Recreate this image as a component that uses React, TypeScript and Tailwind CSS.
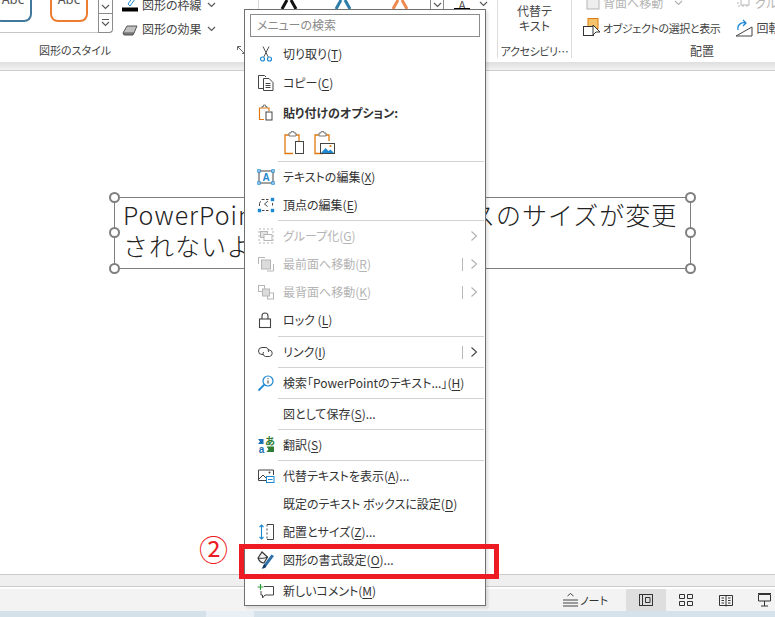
import React from "react";

const font = "[font-family:'Noto_Sans_CJK_JP','Noto_Sans',sans-serif] [font-feature-settings:'palt']";

const S = ({ w = 18, h = 18, vb, children, cls = "" }: { w?: number; h?: number; vb?: string; children: React.ReactNode; cls?: string }) => (
  <svg width={w} height={h} viewBox={vb ?? `0 0 ${w} ${h}`} fill="none" className={`block shrink-0 ${cls}`}>{children}</svg>
);

const DK = "#444";
const BL = "#1e88d2";
const OR = "#e07a10";
const GR = "#b5b5b5";

const Scissors = () => (
  <S><path d="M6 1.500 L11.200 12 M12 1.500 L6.800 12" stroke="#555" strokeWidth="1" /><circle cx="5.500" cy="14" r="2" stroke={BL} strokeWidth="1.200" /><circle cx="12.500" cy="14" r="2" stroke={BL} strokeWidth="1.200" /></S>
);
const Copy = () => (
  <S><path d="M6 14.500H1.500V1.500H7.500L9 3" stroke={DK} /><path d="M6.500 4.500H12L16 8.500V16.500H6.500Z" fill="#fff" stroke={DK} /><path d="M8.500 9.500h5M8.500 11.500h5M8.500 13.500h5" stroke={DK} /></S>
);
const Paste = () => (
  <S><path d="M7 15.500H2.500V4H12V7" stroke={OR} strokeWidth="1.200" /><path d="M5 4V2.500H6.500V1H8.500V2.500H10V4" stroke="#777" /><rect x="9" y="8" width="6" height="8" fill="#fff" stroke={DK} /></S>
);
const PasteBig = ({ picture }: { picture?: boolean }) => (
  <S w={22} h={24}>
    <path d="M9 22.500H1V4H15V10" stroke={OR} strokeWidth="1.300" />
    <path d="M5 4V2H7V0.700H10V2H12V5H5Z" fill="#fff" stroke="#777" />
    {picture ? (
      <>
        <rect x="6.500" y="12.500" width="14" height="10" fill="#fff" stroke={DK} />
        <path d="M7 22l4.500-5 3 3 2-1.500 3.500 3.500Z" fill={BL} />
        <circle cx="16.500" cy="15" r="1.100" fill={OR} />
      </>
    ) : (
      <rect x="11.500" y="10.500" width="8" height="12" fill="#fff" stroke={DK} />
    )}
  </S>
);
const TextEdit = () => (
  <S>
    <rect x="2" y="3" width="14" height="12" stroke="#444" />
    {[[2, 3], [16, 3], [2, 15], [16, 15]].map(([x, y], i) => <rect key={i} x={x - 1.200} y={y - 1.200} width="2.400" height="2.400" fill="#fff" stroke={BL} />)}
    <text x="9" y="12.500" textAnchor="middle" fontSize="10" fontWeight="700" fill={BL} fontFamily="Liberation Sans">A</text>
  </S>
);
const Vertices = () => (
  <S>
    <path d="M5 3.500h8M2.500 7.500L4.500 3.500M15.500 7v4M5 14.500h8M2.500 7.500v4" stroke={DK} strokeDasharray="2.500 1.500" />
    <path d="M11 5L7.500 8l3 2.500" stroke={DK} />
    {[[15.500, 3.500], [2.500, 14.500], [15.500, 14.500]].map(([x, y], i) => <rect key={i} x={x - 1.700} y={y - 1.700} width="3.400" height="3.400" fill={BL} />)}
  </S>
);
const Group = () => (
  <S>
    <rect x="2" y="2" width="14" height="14" stroke={GR} strokeDasharray="2 2" />
    <rect x="3.500" y="4.500" width="7" height="6" fill="#e4e4e4" stroke={GR} />
    <rect x="7" y="7.500" width="8" height="6" fill="#fff" stroke={GR} />
  </S>
);
const Front = () => (
  <S>
    <path d="M1.500 9V2.500H8" stroke={GR} /><path d="M16.500 9v7H10" stroke={GR} />
    <rect x="4.500" y="5" width="9" height="9" fill="#dcdcdc" stroke={GR} />
  </S>
);
const Back = () => (
  <S>
    <rect x="1.500" y="2.500" width="6" height="6" fill="#fff" stroke={GR} />
    <rect x="10.500" y="10" width="6" height="6" fill="#fff" stroke={GR} />
    <rect x="5.500" y="6" width="7" height="7" fill="#dcdcdc" stroke={GR} />
  </S>
);
const Lock = () => (
  <S><rect x="2.500" y="8" width="11" height="8.500" stroke={DK} strokeWidth="1.100" /><path d="M5 8V5a3 3 0 0 1 6 0v3" stroke={DK} strokeWidth="1.100" /></S>
);
const LinkIcon = () => (
  <S>
    <path d="M6.500 11.500H5a3.500 3.500 0 0 1 0-7h4a3.400 3.400 0 0 1 2.500 4.500" stroke={DK} />
    <path d="M10.500 7h2a3.300 3.300 0 0 1 0 6.500h-4a3 3 0 0 1-2-4.500" stroke={DK} />
  </S>
);
const SearchI = () => (
  <S><circle cx="11" cy="7" r="5" stroke={BL} strokeWidth="1.200" /><path d="M7.300 10.700L1.500 16.500" stroke={BL} strokeWidth="1.800" /><path d="M11 6.500V9.500M11 4.200v1" stroke="#333" /></S>
);
const Translate = () => (
  <S>
    <path d="M1 3h5.500v5H1l2-2.500Z" fill="#1a6fb5" />
    <text x="13" y="8.500" textAnchor="middle" fontSize="10" fontWeight="700" fill="#2e7d32" fontFamily="Noto Sans CJK JP">あ</text>
    <path d="M9.500 10.500H17v5.500H9.500l2-2.700Z" fill="#2e7d32" />
    <text x="4.500" y="17" textAnchor="middle" fontSize="10" fontWeight="700" fill="#1a6fb5" fontFamily="Liberation Sans">a</text>
  </S>
);
const AltText = () => (
  <S>
    <path d="M9 13.500H1.500V3h15v5" stroke={DK} />
    <circle cx="12.500" cy="5.500" r="1" fill={DK} />
    <path d="M2 12l4-4 3 3" stroke={DK} />
    <rect x="9.500" y="9.500" width="7.500" height="6" fill="#fff" stroke={BL} />
    <path d="M11 12.500h4.500" stroke={BL} />
  </S>
);
const SizeIcon = () => (
  <S>
    <path d="M4.500 2v14M2.500 4l2-2 2 2M2.500 14l2 2 2-2" stroke={BL} strokeWidth="1.100" />
    <path d="M10 1.500h6.500v15H10" stroke={DK} />
    <path d="M10 1.500v15" stroke={DK} strokeDasharray="2 2" />
  </S>
);
const FormatIcon = () => (
  <S>
    <path d="M1 7L5 1l5.500 5L7 12C4.500 12 2 9.500 1 7Z" fill="#f4f4f4" stroke="#333" strokeWidth="1.200" />
    <path d="M1 7c2 .5 6 .8 9.500-1" stroke="#333" />
    <path d="M7 13.500L14.500 3.500l2.500 1.500-7.500 10Z" fill="#2b6ea8" />
    <path d="M4.500 17.500c2.500 0 4.500-.5 5-2.500L7.500 13C6 13.500 6 16.500 4.500 17.500Z" fill="#123f66" />
  </S>
);
const CommentIcon = () => (
  <S>
    <path d="M7 4.500H16.500V13H8L5.500 16V13H4V9" stroke={DK} />
    <path d="M0.500 5h6M3.500 2v6" stroke="#2e9e3f" strokeWidth="1.200" />
  </S>
);

const Chevron = ({ dim }: { dim?: boolean }) => (
  <S w={8} h={12}><path d="M1.500 1.500L6.500 6 1.500 10.500" stroke={dim ? "#b0b0b0" : "#444"} strokeWidth="1.100" /></S>
);
const Down = ({ dim }: { dim?: boolean }) => (
  <S w={9} h={6}><path d="M1 1l3.500 3.500L8 1" stroke={dim ? "#b0b0b0" : "#555"} strokeWidth="1.100" /></S>
);

const Sep = ({ h = "h-[3px]" }: { h?: string }) => (
  <div className={`${h} flex items-center pl-[33px] pr-[1px]`}>
    <div className="h-px w-full bg-[#d2d2d2]" />
  </div>
);

type RowProps = {
  icon?: React.ReactNode;
  label: string;
  keyChar?: string;
  tail?: string;
  dim?: boolean;
  sub?: "split" | "plain";
  h?: string;
  bold?: boolean;
};

const Row = ({ icon, label, keyChar, tail, dim, sub, h = "h-[28px]", bold }: RowProps) => (
  <div className={`${h} flex items-center pl-[12px] pr-[7px] ${dim ? "text-[#b4b4b4]" : "text-[#333]"}`}>
    <div className="w-[18px] flex justify-center">{icon}</div>
    <div className={`ml-[8px] flex-1 whitespace-nowrap text-[12px] leading-none ${bold ? "font-bold" : ""}`}>
      {label}
      {keyChar && (
        <>
          (<span className="underline underline-offset-2">{keyChar}</span>)
        </>
      )}
      {tail}
    </div>
    {sub === "split" && <div className="mr-[7px] h-[13px] w-px bg-[#b8b8b8]" />}
    {sub && <Chevron dim={dim} />}
  </div>
);

const Menu = () => (
  <div className="absolute left-[244px] top-[9px] w-[242px] border border-[#707070] bg-white shadow-[2px_2px_3px_rgba(0,0,0,0.12)]">
    <div className="mx-[5px] mt-[4px] mb-[3px] flex h-[23px] items-center border border-[#8c8c8c] px-[6px] pb-[2px] text-[12px] text-[#8a8a8a]">メニューの検索</div>
    <Row h="h-[28px]" icon={<Scissors />} label="切り取り" keyChar="T" />
    <Row h="h-[30px]" icon={<Copy />} label="コピー" keyChar="C" />
    <Row h="h-[29px]" icon={<Paste />} label="貼り付けのオプション:" bold />
    <div className="flex h-[33px] items-start gap-[8px] pl-[39px] pt-[4px]">
      <PasteBig />
      <PasteBig picture />
    </div>
    <Sep />
    <Row icon={<TextEdit />} label="テキストの編集" keyChar="X" />
    <Row icon={<Vertices />} label="頂点の編集" keyChar="E" />
    <Sep />
    <Row icon={<Group />} label="グループ化" keyChar="G" dim sub="plain" />
    <Row icon={<Front />} label="最前面へ移動" keyChar="R" dim sub="split" />
    <Row icon={<Back />} label="最背面へ移動" keyChar="K" dim sub="split" />
    <Row icon={<Lock />} label="ロック " keyChar="L" />
    <Sep h="h-[4px]" />
    <Row icon={<LinkIcon />} label="リンク" keyChar="I" sub="split" />
    <Sep />
    <Row icon={<SearchI />} label="検索「PowerPointのテキスト...」" keyChar="H" />
    <Sep />
    <Row label="図として保存" keyChar="S" tail="..." />
    <Sep />
    <Row icon={<Translate />} label="翻訳" keyChar="S" />
    <Sep />
    <Row icon={<AltText />} label="代替テキストを表示" keyChar="A" tail="..." />
    <Row label="既定のテキスト ボックスに設定" keyChar="D" />
    <Row icon={<SizeIcon />} label="配置とサイズ" keyChar="Z" tail="..." />
    <Row icon={<FormatIcon />} label="図形の書式設定" keyChar="O" tail="..." />
    <Sep />
    <Row icon={<CommentIcon />} label="新しいコメント" keyChar="M" />
  </div>
);

const Handle = ({ cls }: { cls: string }) => (
  <div className={`absolute h-[11px] w-[11px] rounded-full border-2 border-[#7f7f7f] bg-white ${cls}`} />
);

const TextBox = () => (
  <div className="absolute left-[114px] top-[197px] h-[72px] w-[577px] border border-[#7f7f7f] bg-white pl-[8px] pt-px text-[25px] font-light leading-[31px] tracking-[1px] text-[#222] whitespace-nowrap [font-feature-settings:normal]">
    <div>PowerPointのテキストボックスのサイズが変更</div>
    <div>されないようにする</div>
    <Handle cls="-left-[6px] -top-[6px]" />
    <Handle cls="-right-[6px] -top-[6px]" />
    <Handle cls="-left-[6px] top-[29px]" />
    <Handle cls="-right-[6px] top-[29px]" />
    <Handle cls="-left-[6px] -bottom-[6px]" />
    <Handle cls="-right-[6px] -bottom-[6px]" />
  </div>
);

const Abc = ({ border, w }: { border: string; w: string }) => (
  <div className={`${w} ${border} flex h-[29px] justify-center rounded-b-[8px] border-2 border-t-0 bg-white text-[13px] leading-none text-[#555]`}>
    <span className="-mt-[1px]">Abc</span>
  </div>
);

const RibbonStyles = () => (
  <div className="flex w-[245px] shrink-0 flex-col">
    <div className="flex h-[44px] items-start">
      <div className="relative flex h-[33px] w-[113px] shrink-0 items-start rounded-br-[4px] border-b border-[#c6c6c6]">
        <div className="-ml-[6px] -mt-[7px] flex items-start gap-[18px]">
          <Abc border="border-[#41789c]" w="w-[38px]" />
          <Abc border="border-[#ed7d31]" w="w-[38px]" />
        </div>
        <div className="absolute right-0 top-0 flex h-[33px] w-[15px] flex-col rounded-br-[4px] border-x border-b border-[#8c8c8c]">
          <div className="flex h-[14px] items-center justify-center border-b border-[#8c8c8c]"><Down /></div>
          <div className="flex flex-1 flex-col items-center justify-center gap-[1px]">
            <div className="h-px w-[7px] bg-[#555]" />
            <Down />
          </div>
        </div>
      </div>
      <div className="ml-[9px] -mt-[5px] flex flex-col gap-[5px] text-[12px] leading-[19px] text-[#444]">
        <div className="flex items-center">
          <S w={17} h={18}><path d="M6 8l5-7 2 2-5 7Z" stroke={BL} /><rect x="0" y="11.500" width="16" height="4" fill="#000" /></S>
          <span className="ml-[3px]">図形の枠線</span>
          <span className="ml-[5px]"><Down /></span>
        </div>
        <div className="flex items-center">
          <S w={17} h={18}><path d="M1 13l4-7h10l-3 7Z" fill="#bfbfbf" stroke="#555" /><path d="M1 13l1 2h9l1-2" fill="#777" stroke="#555" /></S>
          <span className="ml-[3px]">図形の効果</span>
          <span className="ml-[5px]"><Down /></span>
        </div>
      </div>
    </div>
    <div className="relative flex flex-1 items-center justify-center pr-[95px] pb-[4px] text-[11px] text-[#444]">
      図形のスタイル
      <span className="absolute right-0 top-[4px]">
        <S w={8} h={8}><path d="M7.500 5v2.500H5M1 1l6 6M0.500 4V.5H4" stroke="#555" strokeWidth=".9" /></S>
      </span>
    </div>
  </div>
);

const WordArtA = ({ color, w = 20 }: { color: string; w?: number }) => (
  <S w={w} h={9}><path d={`M${w / 2 - 2} 0L${w / 2 - 7} 9M${w / 2 + 2} 0L${w / 2 + 7} 9`} stroke={color} strokeWidth="3" /></S>
);

const RibbonWordArt = () => (
  <div className="flex w-[252px] shrink-0 items-start">
    <div className="ml-[13px] h-[9px] w-px bg-[#d8d8d8]" />
    <div className="ml-[20px]"><WordArtA color="#111" /></div>
    <div className="ml-[34px]"><WordArtA color="#2e7da8" /></div>
    <div className="ml-[37px]"><WordArtA color="#f08b50" /></div>
    <div className="ml-[20px] flex h-[9px] w-[14px] items-center justify-center border-x border-[#8c8c8c]"><Down /></div>
    <div className="ml-[10px] flex h-[9px] w-[16px] flex-col items-center justify-end overflow-hidden">
      <span className="text-[11px] leading-[8px] text-[#444]">A</span>
      <span className="h-px w-full bg-black" />
    </div>
    <div className="ml-[9px] mt-[1px]"><Down /></div>
  </div>
);

const Ribbon = () => (
  <div className="flex h-[62px] shrink-0 overflow-hidden bg-white">
    <RibbonStyles />
    <RibbonWordArt />
    <div className="flex h-[58px] w-[75px] shrink-0 flex-col items-center border-x border-[#dcdcdc] text-[12px] text-[#444]">
      <div className="flex h-[44px] flex-col items-center pt-[3px] leading-[15px]">
        <span>代替テ</span>
        <span>キスト</span>
      </div>
      <span className="whitespace-nowrap text-[11px] leading-[14px] tracking-[-0.4px]">アクセシビリ…</span>
    </div>
    <div className="flex flex-1 flex-col overflow-hidden pl-[11px]">
      <div className="flex h-[44px] items-start">
        <div className="-mt-[7px] flex flex-col gap-[5px] whitespace-nowrap text-[12px] leading-[20px] text-[#444]">
          <div className="flex items-center text-[#b4b4b4]">
            <S w={21} h={20}><path d="M1 2v5" stroke={GR} /><rect x="4" y="5" width="12" height="11" fill="#eee" stroke={GR} /></S>
            <span className="ml-[-1px]">背面へ移動</span>
            <span className="ml-[11px]"><Down dim /></span>
            <span className="ml-[53px]"><S w={19} h={18}><rect x="2" y="2" width="10" height="10" stroke={GR} strokeDasharray="2 2" /><rect x="5" y="5" width="8" height="6" fill="#fff" stroke={GR} /></S></span>
            <span>グル</span>
          </div>
          <div className="flex items-center">
            <S w={21} h={20}>
              <rect x="5" y="0.500" width="10" height="10" fill="#f6c36a" stroke={OR} />
              <rect x="0.500" y="8.500" width="10" height="9" fill="#fff" stroke="#333" />
              <path d="M10 7v10l3-3h4Z" fill="#fff" stroke="#333" />
            </S>
            <span className="ml-[-1px] text-[11px] tracking-[-0.4px]">オブジェクトの選択と表示</span>
            <span className="ml-[15px]">
              <S w={19} h={19}><path d="M1 17L17 8v9Z" fill="#fff" stroke="#444" /><path d="M3 11C2 5 7 3 11 4M8 1l3 3-3 3" stroke={BL} strokeWidth="1.300" /></S>
            </span>
            <span className="ml-[2px]">回転</span>
          </div>
        </div>
      </div>
      <div className="pl-[107px] text-[12px] leading-[14px] text-[#444]">配置</div>
    </div>
  </div>
);

const Status = () => (
  <div className="flex h-[22px] shrink-0 items-center justify-end bg-[#f3f3f3] text-[#333]">
    <S w={17} h={16}><path d="M5.500 4L8.500 1.500 11.500 4M1 8h15M1 11h15M1 14h15" stroke="#444" /></S>
    <span className="ml-[1px] text-[11px]">ノート</span>
    <div className="ml-[18px] flex h-full w-[40px] items-center justify-center bg-[#dedede]">
      <S w={14} h={12}><rect x=".5" y=".5" width="13" height="11" stroke="#333" /><path d="M3.500.5v11M6.500 3.500h4.500v5H6.500Z" stroke="#333" /></S>
    </div>
    <div className="flex w-[40px] items-center justify-center">
      <S w={14} h={12}><path d="M.5.5h5v4h-5ZM8.500.5h5v4h-5ZM.5 7.500h5v4h-5ZM8.500 7.500h5v4h-5Z" stroke="#333" /></S>
    </div>
    <div className="flex w-[39px] items-center justify-center">
      <S w={14} h={13}><path d="M.5 1.500h13v10h-13ZM7 1.500v11M2.500 4h2.500M2.500 6.500h2.500M2.500 9h2.500M9 4h2.500M9 6.500h2.500M9 9h2.500" stroke="#333" /></S>
    </div>
    <div className="flex w-[30px] justify-start overflow-hidden pl-[13px]">
      <S w={14} h={14}><path d="M.5 1.500h12v6.500h-12ZM6.500 8v5M3 13h7M0 .5h13" stroke="#333" /></S>
    </div>
  </div>
);

export default function App() {
  return (
    <div className={`relative flex h-[617px] w-[775px] flex-col overflow-hidden bg-white ${font}`}>
      <Ribbon />
      <div className="h-[9px] shrink-0 border-b border-[#cdcdcd] bg-gradient-to-b from-[#dedede] to-[#f2f2f2]" />
      <div className="flex-1 bg-white" />
      <div className="h-[13px] shrink-0 border-y border-[#cbcbcb] bg-[#efefef]" />
      <div className="h-[2px] shrink-0 bg-white" />
      <Status />
      <div className="flex h-[6px] shrink-0">
        <div className="w-[206px] bg-[#d5e1e8]" />
        <div className="w-[48px] bg-[#e9f0f5]" />
        <div className="flex-1 bg-[#d5e2eb]" />
      </div>
      <TextBox />
      <Menu />
      <div className="absolute left-[239px] top-[544px] h-[35px] w-[260px] border-[5px] border-[#ed1c24]" />
      <div className="absolute left-[199px] top-[530px] text-[29px] leading-[36px] text-[#ed1c24]">②</div>
    </div>
  );
}
